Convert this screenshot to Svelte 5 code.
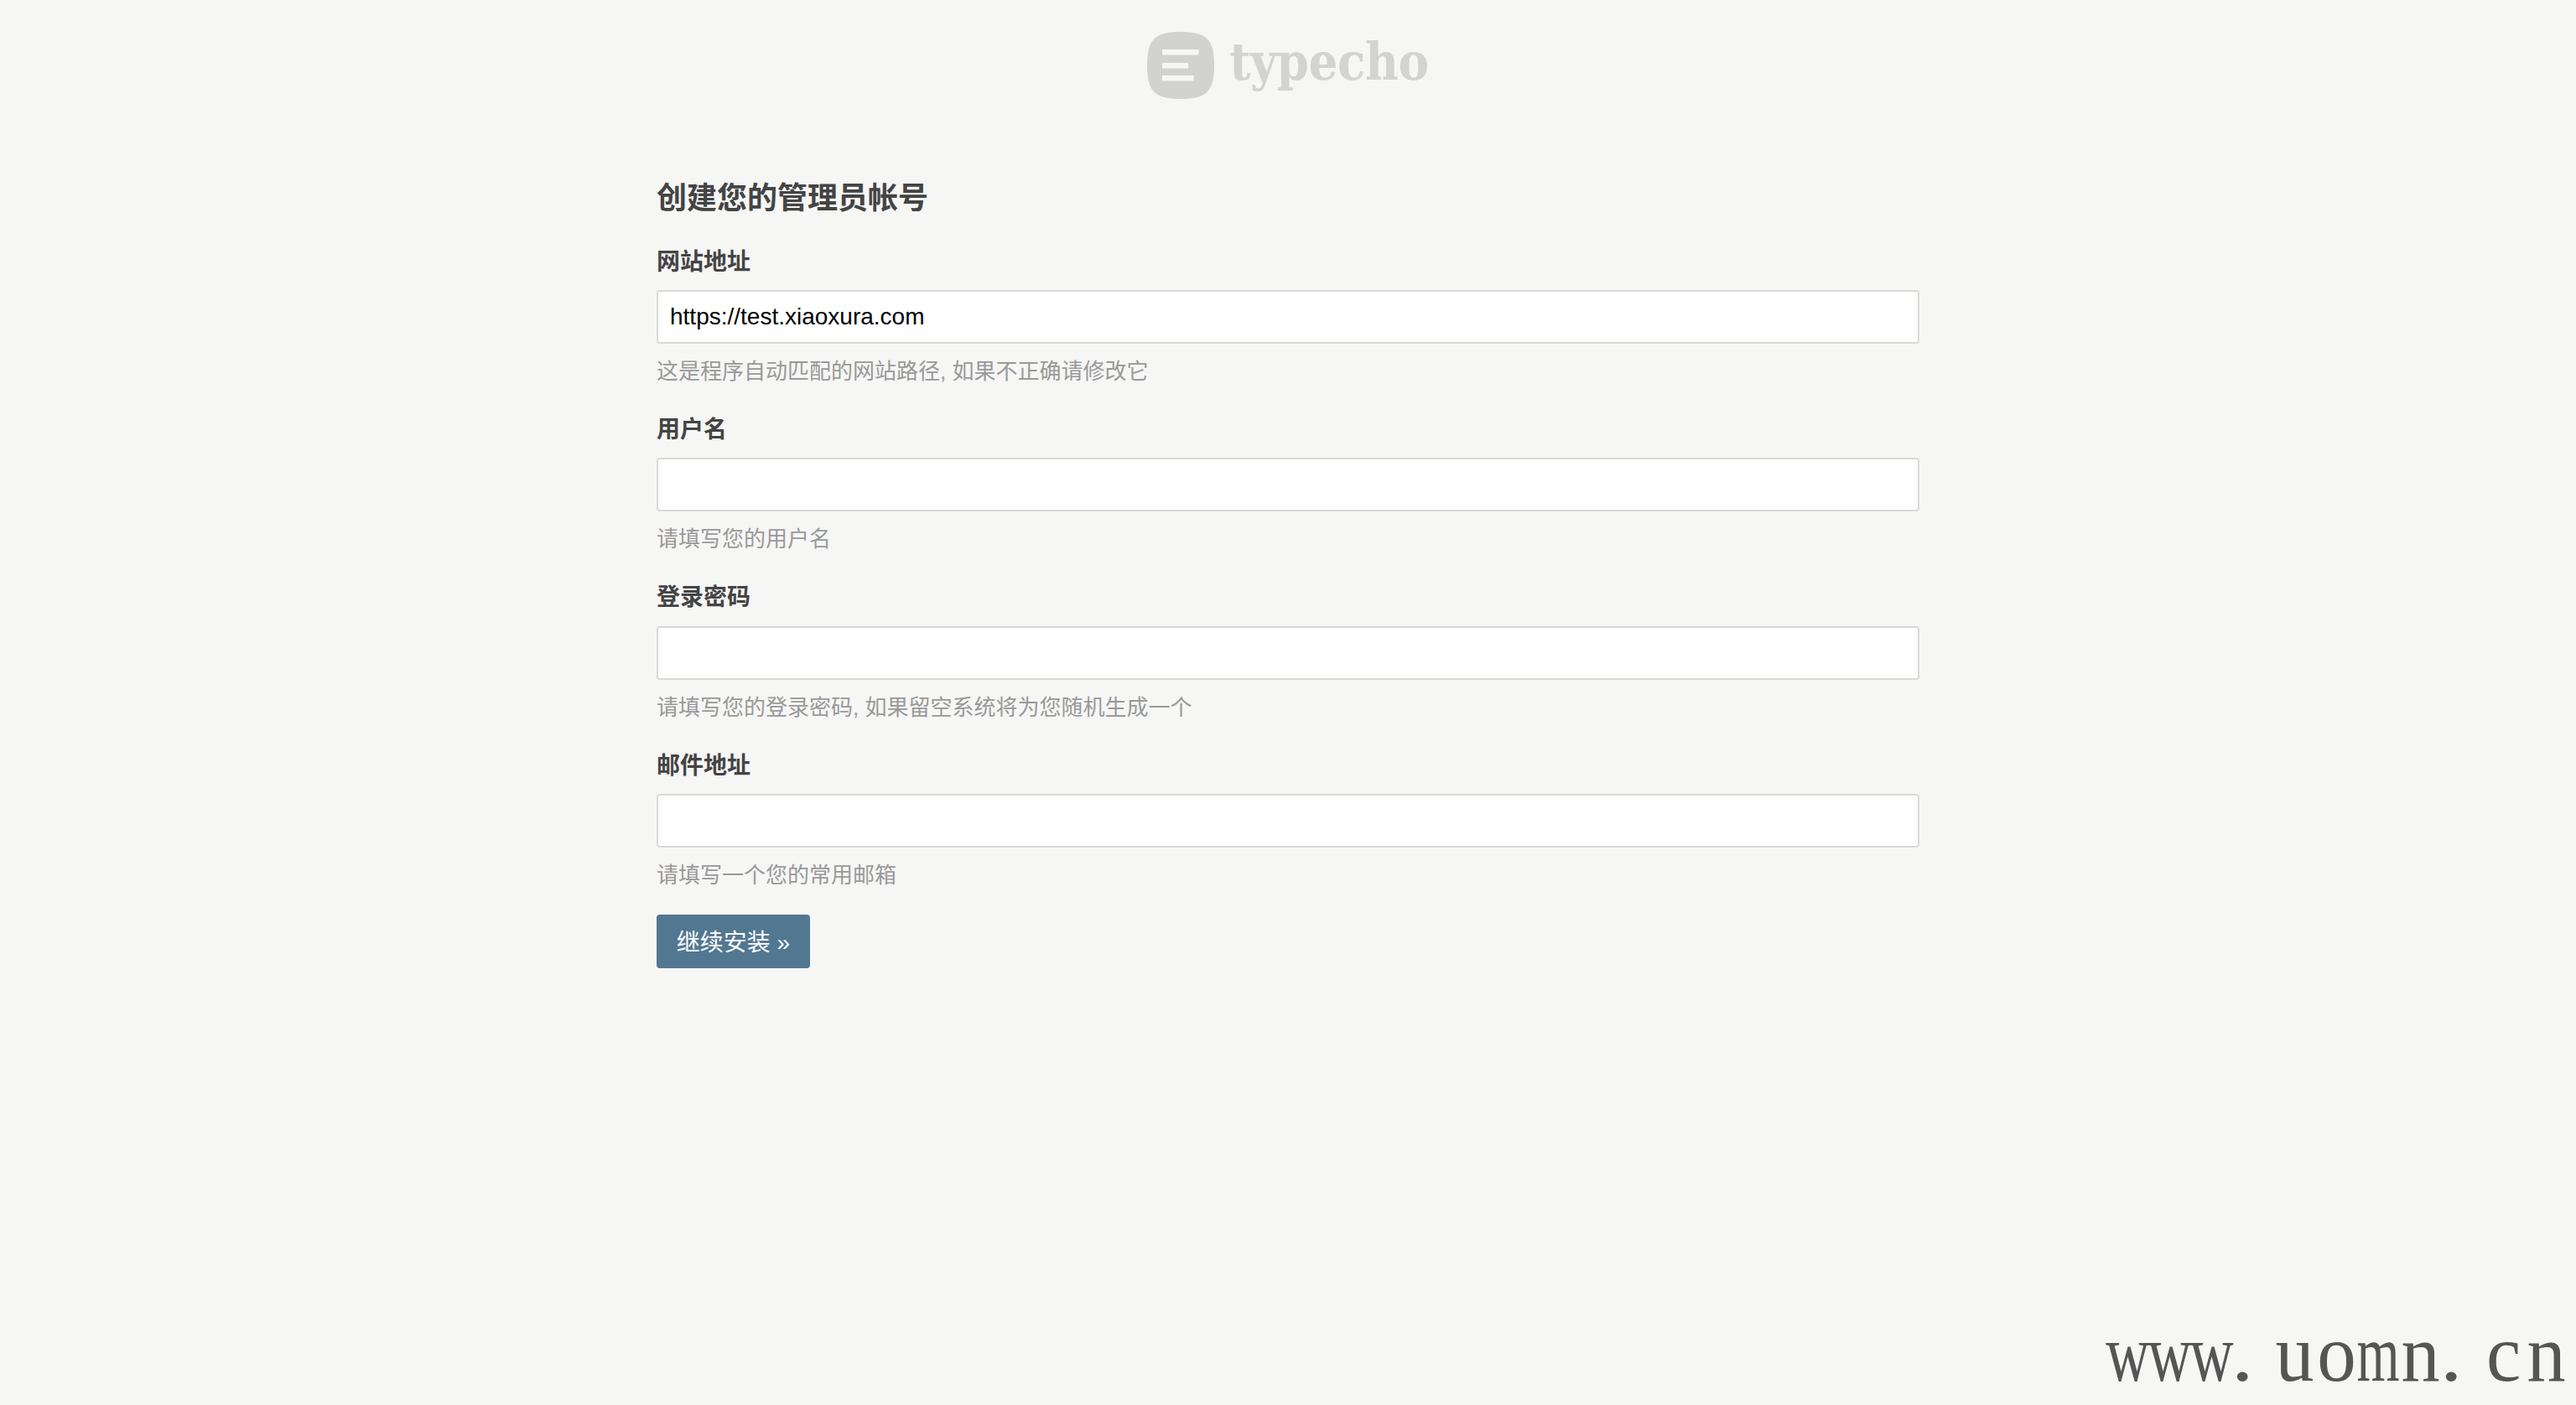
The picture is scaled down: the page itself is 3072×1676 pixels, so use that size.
<script>
  const fields = [
    { label: '网站地址', value: 'https://test.xiaoxura.com', hint: '这是程序自动匹配的网站路径, 如果不正确请修改它' },
    { label: '用户名', value: '', hint: '请填写您的用户名' },
    { label: '登录密码', value: '', hint: '请填写您的登录密码, 如果留空系统将为您随机生成一个' },
    { label: '邮件地址', value: '', hint: '请填写一个您的常用邮箱' }
  ];
  const scale = { w: 0.74, '.': 1.1, u: 0.94, o: 0.95, m: 0.67, n: 0.94, c: 0.95 };
  const mark = 'www.uomn.cn'.split('').map((ch) => ({ ch, sx: scale[ch], dot: ch === '.' }));
</script>

<div class="page">
  <header class="logo">
    <svg class="mark" viewBox="0 0 80 80" width="80" height="80" aria-hidden="true">
      <path d="M40 0C71 0 80 9 80 40C80 71 71 80 40 80C9 80 0 71 0 40C0 9 9 0 40 0Z" fill="#d2d2d0" />
      <rect x="18" y="21" width="43.5" height="6.5" fill="#f6f6f5" />
      <rect x="18" y="37" width="31" height="6.5" fill="#f6f6f5" />
      <rect x="18" y="52" width="37.5" height="6.5" fill="#f6f6f5" />
    </svg>
    <span class="word">typecho</span>
  </header>

  <form class="form">
    <h1>创建您的管理员帐号</h1>
    {#each fields as f}
      <div class="row">
        <label for={f.label}>{f.label}</label>
        <input id={f.label} type="text" value={f.value} />
        <p class="hint">{f.hint}</p>
      </div>
    {/each}
    <button type="button">继续安装 »</button>
  </form>

  <div class="watermark">
    {#each mark as m}
      <span class="cell" class:dot={m.dot}><span class="glyph" style="transform: scaleX({m.sx})">{m.ch}</span></span>
    {/each}
  </div>
</div>

<style>
  :global(body) {
    margin: 0;
    background: #f6f6f5;
  }
  .page {
    height: 1676px;
    overflow: hidden;
    font-family: "Liberation Sans", "Noto Sans CJK SC", sans-serif;
    color: #444;
  }
  .logo {
    display: flex;
    justify-content: center;
    align-items: center;
    gap: 18px;
    padding-top: 38px;
    height: 80px;
  }
  .mark {
    flex: none;
  }
  .word {
    font-family: "DejaVu Serif", serif;
    font-stretch: condensed;
    font-weight: 700;
    font-size: 61px;
    line-height: 72px;
    height: 80px;
    color: #d3d3d1;
    letter-spacing: -0.4px;
  }
  .form {
    width: 1506px;
    margin: 0 auto;
    padding-top: 93px;
  }
  h1 {
    margin: 0;
    font-size: 36px;
    line-height: 52px;
    font-weight: 700;
  }
  .row {
    height: 200.4px;
    padding-top: 29.5px;
    box-sizing: border-box;
  }
  label {
    display: block;
    font-size: 28px;
    line-height: 40px;
    font-weight: 700;
    margin-bottom: 13.5px;
  }
  input {
    display: block;
    width: 100%;
    height: 64px;
    box-sizing: border-box;
    border: 2px solid #d9d9d6;
    border-radius: 4px;
    background: #fff;
    padding: 0 14px;
    font: 28px "Liberation Sans", sans-serif;
    color: #000;
    outline: none;
  }
  .hint {
    margin: 15px 0 0;
    font-size: 26px;
    line-height: 36px;
    color: #999;
  }
  button {
    display: block;
    margin-top: 26px;
    width: 183px;
    height: 64px;
    border: 0;
    border-radius: 4px;
    padding: 0 0 2px;
    background: #527791;
    color: #fff;
    font: 28px "Liberation Sans", "Noto Sans CJK SC", sans-serif;
  }
  .watermark {
    position: absolute;
    right: 11px;
    top: 1565px;
    display: flex;
    color: #555;
    font-family: "Liberation Serif", serif;
    font-size: 98px;
    line-height: 98px;
  }
  .cell {
    display: flex;
    justify-content: center;
    width: 49.9px;
  }
  .cell.dot {
    justify-content: flex-start;
  }
  .glyph {
    flex: none;
    white-space: nowrap;
  }
</style>
